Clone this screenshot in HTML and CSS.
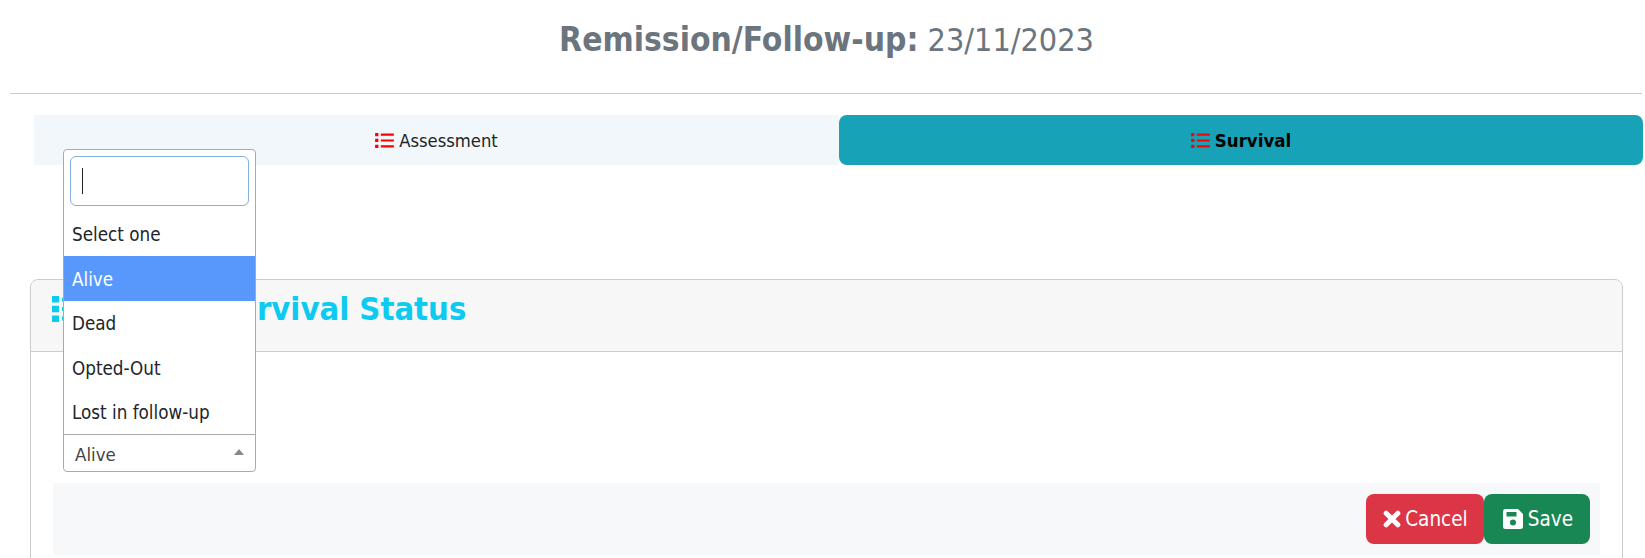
FILE: index.html
```html
<!DOCTYPE html>
<html>
<head>
	<meta charset="utf-8">
	<title>Remission/Follow-up</title>
	<link rel="stylesheet" href="styles.css">
</head>
<body>
	<div class="pageTitle"><b>Remission/Follow-up:</b> 23/11/2023</div>
	<hr class="titleRule">

	<div class="tabBar">
		<a class="tab">
			<svg class="listIcon" viewBox="0 0 20 16"><path d="M0 0h3.500v3.500H0zM0 6.200h3.500v3.500H0zM0 12.500h3.500V16H0zM6 .6h14v2.300H6zM6 6.800h14v2.300H6zM6 13.100h14v2.300H6z"/></svg>
			Assessment
		</a>
		<a class="tab tabActive">
			<svg class="listIcon" viewBox="0 0 20 16"><path d="M0 0h3.500v3.500H0zM0 6.200h3.500v3.500H0zM0 12.500h3.500V16H0zM6 .6h14v2.300H6zM6 6.800h14v2.300H6zM6 13.100h14v2.300H6z"/></svg>
			Survival
		</a>
	</div>

	<div class="card">
		<div class="cardHeader">
			<svg class="headIcon" viewBox="0 0 32 26"><path d="M0 0h7v6.500H0zM0 9.700h7v6.500H0zM0 19.500h7V26H0zM10 1.500h22v4H10zM10 11h22v4H10zM10 20.500h22v4H10z"/></svg>
			<span>Survival Status</span>
		</div>
		<div class="cardBody">
			<div class="selectSlot"></div>
			<div class="formFooter">
				<button class="btn btnCancel">
					<svg class="btnIcon closeIcon" viewBox="0 0 16 16"><path d="M2.800 2.800 13.200 13.200M13.200 2.800 2.800 13.200"/></svg>
					Cancel
				</button>
				<button class="btn btnSave">
					<svg class="btnIcon" viewBox="0 0 20 20"><path fill-rule="evenodd" d="M2.500 0H15l5 5v12.500a2.500 2.500 0 0 1-2.500 2.500h-15A2.500 2.500 0 0 1 0 17.500v-15A2.500 2.500 0 0 1 2.500 0zM3.500 3v4.500h10V3zM10 10.500a3 3 0 1 0 0 6 3 3 0 0 0 0-6z"/></svg>
					Save
				</button>
			</div>
		</div>
	</div>

	<!-- open select2 style dropdown, lies over the tabs and the card -->
	<div class="dropdown">
		<div class="searchWrap"><div class="searchBox"><span class="caret"></span></div></div>
		<ul class="options">
			<li>Select one</li>
			<li class="optionActive">Alive</li>
			<li>Dead</li>
			<li>Opted-Out</li>
			<li>Lost in follow-up</li>
		</ul>
		<div class="selected">Alive<span class="arrowUp"></span></div>
	</div>
</body>
</html>
```

FILE: styles.css
```css
html, body { margin: 0; padding: 0; height: 558px; overflow: hidden; }
body { position: relative; background-color: #fff; color: #212529; font: normal 18.5px "DejaVu Sans Condensed", "DejaVu Sans", sans-serif; }

.pageTitle { height: 80px; line-height: 80px; padding-left: 8px; text-align: center; font-size: 32.1px; color: #6c757d; }
.pageTitle b { font-size: 33.3px; }
.titleRule { height: 1px; border: none; background-color: #c9cbcd; margin: 13px 3px 0 10px; }

.tabBar { display: flex; margin: 21px 2px 0 34px; height: 50px; font-size: 18.3px; }
.tab { display: flex; align-items: center; justify-content: center; color: #212529; }
.tab { flex: 0 0 805px; background-color: #f2f7fb; }
.tab .listIcon { margin-right: 5px; }
.tabActive { flex: 1; background-color: #17a2b8; border-radius: 8px; color: #000; font-weight: bold; font-size: 18.5px; }
.listIcon { width: 19px; height: 15px; fill: #f00; }

.card { margin: 114px 22px 0 30px; height: 300px; border: 1px solid #ccc; border-radius: 8px; }
.cardHeader { display: flex; align-items: center; height: 72px; padding: 0 0 13px 21px; box-sizing: border-box; background-color: #f7f7f7; border-bottom: 1px solid #ccc; border-radius: 8px 8px 0 0; color: #0dcaf0; font-size: 32.5px; font-weight: bold; }
.headIcon { width: 32px; height: 26px; margin-right: 131px; fill: #0dcaf0; }
.cardBody { padding: 0 22px; }
.selectSlot { height: 131px; }
.formFooter { display: flex; justify-content: flex-end; height: 72px; padding: 11px 10px 0 0; box-sizing: border-box; background-color: #f7f8fa; }

.btn { display: flex; align-items: center; height: 50px; padding: 0 17px; border: none; border-radius: 8px; color: #fff; font: normal 20.5px "DejaVu Sans Condensed", "DejaVu Sans", sans-serif; }
.btnCancel { background-color: #dc3545; padding: 0 16px 0 17px; }
.btnSave { background-color: #198754; padding-left: 19px; }
.btnIcon { width: 20px; height: 20px; margin-right: 5px; fill: #fff; }
.closeIcon { width: 18px; height: 18px; margin-right: 4px; fill: none; stroke: #fff; stroke-width: 4.4; stroke-linecap: round; }

.dropdown { position: absolute; left: 63px; top: 149px; width: 191px; background-color: #fff; border: 1px solid #aaa; border-radius: 4px; }
.searchWrap { padding: 6px 6px 5px 6px; }
.searchBox { height: 50px; box-sizing: border-box; border: 1px solid #86b0e0; border-radius: 6px; padding: 11px 0 0 11px; }
.caret { display: block; width: 1px; height: 26px; background-color: #222; }
.options { list-style: none; margin: 0; padding: 0; border-bottom: 1px solid #aaa; font-size: 18.7px; }
.options li { height: 44.6px; line-height: 48px; padding-left: 8px; }
.options .optionActive { height: 45px; margin-bottom: -0.4px; background-color: #5897fb; color: #fff; }
.selected { position: relative; height: 36px; line-height: 39px; padding-left: 11px; color: #444; }
.arrowUp { position: absolute; right: 11px; top: 14px; border-left: 5px solid transparent; border-right: 5px solid transparent; border-bottom: 6px solid #888; }
```
